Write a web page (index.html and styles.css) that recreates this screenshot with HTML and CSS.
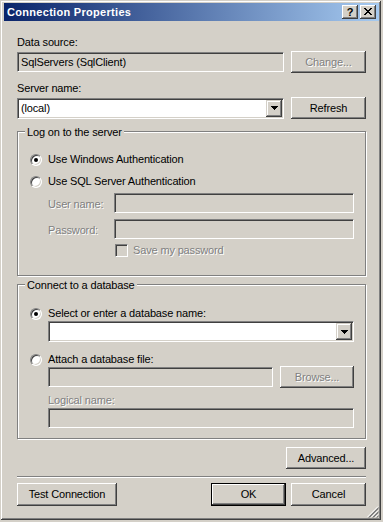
FILE: index.html
```html
<!DOCTYPE html>
<html lang="en">
<head>
    <meta charset="UTF-8">
    <meta name="viewport" content="width=device-width, initial-scale=1.0">
    <title>Connection Properties</title>
    <link rel="stylesheet" href="styles.css">
</head>
<body>
    <div class="window">
        <div class="titlebar">
            <span class="title">Connection Properties</span>
            <div class="caption-buttons">
                <button class="caption-btn help">?</button>
                <button class="caption-btn close">
                    <svg width="8" height="7" viewBox="0 0 8 7">
                        <path d="M0 0h2v1h1v1h2v-1h1v-1h2v1h-1v1h-1v1h-1v1h1v1h1v1h1v1h-2v-1h-1v-1h-2v1h-1v1h-2v-1h1v-1h1v-1h1v-1h-1v-1h-1v-1h-1z" fill="#000"/>
                    </svg>
                </button>
            </div>
        </div>

        <div class="dialog">
            <div class="label first">Data source:</div>
            <div class="row">
                <div class="field readonly">SqlServers (SqlClient)</div>
                <button class="btn disabled">Change...</button>
            </div>

            <div class="label spaced">Server name:</div>
            <div class="row">
                <div class="combo">
                    <span class="combo-text">(local)</span>
                    <span class="combo-arrow">
                        <svg width="7" height="4" viewBox="0 0 7 4"><path d="M0 0h7v1h-1v1h-1v1h-1v1h-1v-1h-1v-1h-1v-1h-1z" fill="#000"/></svg>
                    </span>
                </div>
                <button class="btn">Refresh</button>
            </div>

            <div class="group logon">
                <span class="legend">Log on to the server</span>
                <div class="radio-row"><span class="radio checked"></span>Use Windows Authentication</div>
                <div class="radio-row second"><span class="radio"></span>Use SQL Server Authentication</div>
                <div class="sub-row user">
                    <span class="sub-label disabled-text">User name:</span>
                    <div class="field disabled"></div>
                </div>
                <div class="sub-row pass">
                    <span class="sub-label disabled-text">Password:</span>
                    <div class="field disabled"></div>
                </div>
                <div class="check-row">
                    <span class="checkbox"></span>
                    <span class="disabled-text">Save my password</span>
                </div>
            </div>

            <div class="group database">
                <span class="legend">Connect to a database</span>
                <div class="radio-row"><span class="radio checked"></span>Select or enter a database name:</div>
                <div class="indent">
                    <div class="combo db-combo">
                        <span class="combo-text"></span>
                        <span class="combo-arrow">
                            <svg width="7" height="4" viewBox="0 0 7 4"><path d="M0 0h7v1h-1v1h-1v1h-1v1h-1v-1h-1v-1h-1v-1h-1z" fill="#000"/></svg>
                        </span>
                    </div>
                </div>
                <div class="radio-row attach"><span class="radio"></span>Attach a database file:</div>
                <div class="indent file-row">
                    <div class="field disabled"></div>
                    <button class="btn disabled browse">Browse...</button>
                </div>
                <div class="indent logical-label disabled-text">Logical name:</div>
                <div class="indent logical">
                    <div class="field disabled"></div>
                </div>
            </div>

            <div class="advanced-row">
                <button class="btn advanced">Advanced...</button>
            </div>

            <div class="separator"></div>

            <div class="footer">
                <button class="btn test">Test Connection</button>
                <div class="footer-right">
                    <button class="btn default">OK</button>
                    <button class="btn">Cancel</button>
                </div>
            </div>
        </div>

        <svg class="grip" width="12" height="12" viewBox="0 0 12 12">
            <path d="M11 0.5L0.5 11M11 4.5L4.5 11M11 8.5L8.5 11" stroke="#fff" stroke-width="1"/>
            <path d="M11.5 1.5L1.5 11.5M11.5 2.5L2.5 11.5M11.5 5.5L5.5 11.5M11.5 6.5L6.5 11.5M11.5 9.5L9.5 11.5M11.5 10.5L10.5 11.5" stroke="#808080" stroke-width="1"/>
        </svg>
    </div>
</body>
</html>
```

FILE: styles.css
```css
* {
    margin: 0;
    padding: 0;
    box-sizing: border-box;
}

html, body {
    width: 383px;
    height: 522px;
    overflow: hidden;
}

body {
    background: #d4d0c8;
    font-family: "Liberation Sans", Arial, sans-serif;
    font-size: 11px;
    line-height: 13px;
    letter-spacing: -0.15px;
    color: #000;
}

button {
    font: inherit;
    letter-spacing: inherit;
    color: inherit;
    border: none;
    background: none;
    cursor: default;
}

.window {
    position: relative;
    width: 381px;
    height: 520px;
    padding: 3px 2px 2px 4px;
    background: #d4d0c8;
    box-shadow: inset 1px 1px #d4d0c8, inset -1px -1px #404040,
                inset 2px 2px #fff, inset -2px -2px #808080;
    display: flex;
    flex-direction: column;
}

/* title bar */
.titlebar {
    height: 18px;
    display: flex;
    align-items: center;
    padding-left: 3px;
    background: linear-gradient(to right, #0a246a, #a6caf0);
}

.title {
    color: #fff;
    font-weight: bold;
    font-size: 11px;
    letter-spacing: 0.3px;
}

.caption-buttons {
    margin-left: auto;
    margin-right: 3px;
    display: flex;
    gap: 2px;
}

.caption-btn {
    width: 16px;
    height: 14px;
    background: #d4d0c8;
    box-shadow: inset -1px -1px #404040, inset 1px 1px #fff,
                inset -2px -2px #808080, inset 2px 2px #d4d0c8;
    display: flex;
    align-items: center;
    justify-content: center;
}

.caption-btn.help {
    font-weight: bold;
    font-size: 11px;
    line-height: 14px;
    padding-bottom: 1px;
}

.caption-btn.close svg {
    display: block;
    margin-top: -1px;
}

/* dialog body */
.dialog {
    display: flex;
    flex-direction: column;
    padding: 15px 13px 0 13px;
}

.label.spaced {
    margin-top: 9px;
}

.row {
    margin-top: 2px;
    height: 22px;
    display: flex;
    align-items: center;
    gap: 7px;
}

.field {
    flex: 1;
    height: 20px;
    padding: 3px 3px;
    background: #fff;
    border: 1px solid;
    border-color: #808080 #fff #fff #808080;
    box-shadow: inset 1px 1px #404040, inset -1px -1px #d4d0c8;
    white-space: nowrap;
    overflow: hidden;
}

.field.readonly,
.field.disabled {
    background: #d4d0c8;
}

.combo {
    flex: 1;
    height: 21px;
    display: flex;
    align-items: center;
    padding: 1px;
    background: #fff;
    border: 1px solid;
    border-color: #808080 #fff #fff #808080;
    box-shadow: inset 1px 1px #404040, inset -1px -1px #d4d0c8;
}

.combo-text {
    flex: 1;
    padding-left: 2px;
}

.combo-arrow {
    width: 16px;
    height: 17px;
    background: #d4d0c8;
    box-shadow: inset -1px -1px #404040, inset 1px 1px #d4d0c8,
                inset -2px -2px #808080, inset 2px 2px #fff;
    display: flex;
    align-items: center;
    justify-content: center;
}

.combo-arrow svg {
    display: block;
}

.btn {
    width: 75px;
    height: 22px;
    background: #d4d0c8;
    box-shadow: inset -1px -1px #404040, inset 1px 1px #fff,
                inset -2px -2px #808080, inset 2px 2px #d4d0c8;
    text-align: center;
    flex-shrink: 0;
}

.btn.disabled,
.disabled-text {
    color: #808080;
    text-shadow: 1px 1px #fff;
}

.btn.default {
    border: 1px solid #000;
}

/* group boxes */
.group {
    position: relative;
    border: 1px solid #808080;
    box-shadow: inset 1px 1px #fff, 1px 1px #fff;
    padding: 0 11px 0 12px;
    display: flex;
    flex-direction: column;
}

.legend {
    position: absolute;
    top: -6px;
    left: 7px;
    padding: 0 2px;
    background: #d4d0c8;
}

.group.logon {
    margin-top: 12px;
    height: 145px;
    padding-top: 21px;
}

.group.database {
    margin-top: 8px;
    height: 155px;
    padding-top: 22px;
}

.radio-row {
    height: 13px;
    display: flex;
    align-items: center;
    gap: 6px;
}

.radio-row.second {
    margin-top: 9px;
}

.radio-row.attach {
    margin-top: 11px;
}

.radio {
    position: relative;
    width: 12px;
    height: 12px;
    border-radius: 50%;
    background: #fff;
    border: 1px solid;
    border-color: #808080 #fff #fff #808080;
    box-shadow: inset 1px 1px #404040, inset -1px -1px #d4d0c8;
}

.radio.checked::after {
    content: "";
    position: absolute;
    left: 3px;
    top: 3px;
    width: 4px;
    height: 4px;
    border-radius: 50%;
    background: #000;
}

.sub-row {
    height: 20px;
    display: flex;
    align-items: center;
    padding-left: 18px;
}

.sub-row.user {
    margin-top: 5px;
}

.sub-row.pass {
    margin-top: 6px;
}

.sub-label {
    width: 66px;
    padding-top: 2px;
}

.check-row {
    margin-top: 5px;
    height: 13px;
    display: flex;
    align-items: center;
    gap: 5px;
    padding-left: 85px;
}

.checkbox {
    width: 13px;
    height: 13px;
    background: #d4d0c8;
    border: 1px solid;
    border-color: #808080 #fff #fff #808080;
    box-shadow: inset 1px 1px #404040, inset -1px -1px #d4d0c8;
}

.indent {
    padding-left: 18px;
    display: flex;
}

.db-combo {
    margin-top: 1px;
}

.file-row {
    height: 22px;
    align-items: center;
    gap: 7px;
}

.btn.browse {
    width: 74px;
}

.logical-label {
    margin-top: 6px;
}

.logical {
    margin-top: 1px;
}

/* bottom area */
.advanced-row {
    margin-top: 8px;
    display: flex;
    justify-content: flex-end;
}

.btn.advanced {
    width: 80px;
}

.separator {
    margin-top: 7px;
    height: 2px;
    border-top: 1px solid #808080;
    border-bottom: 1px solid #fff;
}

.footer {
    margin-top: 5px;
    display: flex;
    justify-content: space-between;
}

.footer .btn {
    height: 23px;
}

.btn.test {
    width: 100px;
}

.footer-right {
    display: flex;
    gap: 5px;
}

.grip {
    position: absolute;
    right: 2px;
    bottom: 2px;
}
```
